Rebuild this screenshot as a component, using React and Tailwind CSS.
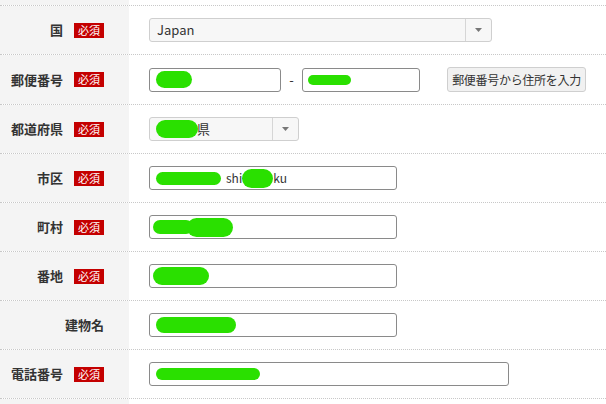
const font = { fontFamily: '"Noto Sans CJK JP", "Noto Sans", sans-serif' };

function Badge() {
  return (
    <span className="ml-[11px] inline-flex h-[15px] w-[30px] items-center justify-center bg-[#c40000] text-[11px] font-normal leading-none text-white">
      必須
    </span>
  );
}

function Blob({ className }) {
  return <span className={`inline-block shrink-0 rounded-full bg-[#2ae000] ${className}`} />;
}

function Row({ label, required = true, h = 'h-[49px]', children }) {
  return (
    <div className={`grid grid-cols-[129px_1fr] border-b border-dotted border-[#c8c8c8] ${h}`}>
      <div className="flex items-center justify-end bg-[#f4f4f4] pr-[25px] text-[13px] font-bold text-[#333]">
        <span>{label}</span>
        {required && <Badge />}
      </div>
      <div className="flex items-center gap-0 pl-[20px]">{children}</div>
    </div>
  );
}

function Field({ w, children }) {
  return (
    <div className={`flex h-[24px] items-center overflow-hidden rounded-[3px] border border-[#8a8a8a] bg-white pl-[3px] text-[12px] text-[#333] ${w}`}>
      {children}
    </div>
  );
}

function Select({ w, children }) {
  return (
    <div className={`flex h-[24px] items-stretch rounded-[3px] border border-[#cfcfcf] bg-[#f7f7f7] text-[13px] text-[#333] ${w}`}>
      <div className="flex flex-1 items-center pl-[7px]">{children}</div>
      <div className="flex w-[26px] items-center justify-center border-l border-[#d6d6d6]">
        <svg width="7" height="4" viewBox="0 0 7 4">
          <path d="M0 0h7L3.5 4z" fill="#777" />
        </svg>
      </div>
    </div>
  );
}

export default function App() {
  return (
    <div className="h-[404px] w-[606px] overflow-hidden bg-white" style={font}>
      <div className="grid h-[6px] grid-cols-[129px_1fr] border-b border-dotted border-[#c8c8c8]">
        <div className="bg-[#f4f4f4]" />
        <div />
      </div>
      <Row label="国">
        <Select w="w-[343px]">Japan</Select>
      </Row>
      <Row label="郵便番号" h="h-[50px]">
        <Field w="w-[132px]">
          <Blob className="ml-[3px] h-[17px] w-[36px]" />
        </Field>
        <span className="w-[21px] text-center text-[13px] text-[#333]">-</span>
        <Field w="w-[118px]">
          <Blob className="ml-[2px] h-[10px] w-[43px]" />
        </Field>
        <button className="ml-[27px] flex h-[25px] w-[139px] items-center justify-center rounded-[3px] border border-[#cfcfcf] bg-[#f1f1f1] text-[12px] tracking-[-0.3px] text-[#333]">
          郵便番号から住所を入力
        </button>
      </Row>
      <Row label="都道府県">
        <Select w="w-[150px]">
          <Blob className="-ml-[1px] h-[18px] w-[42px]" />
          <span className="-ml-[1px]">県</span>
        </Select>
      </Row>
      <Row label="市区">
        <Field w="w-[248px]">
          <Blob className="ml-[3px] h-[13px] w-[65px]" />
          <span className="ml-[5px]">shi</span>
          <Blob className="h-[19px] w-[31px]" />
          <span>ku</span>
        </Field>
      </Row>
      <Row label="町村">
        <Field w="w-[248px]">
          <Blob className="ml-[0px] h-[14px] w-[40px]" />
          <Blob className="-ml-[6px] h-[19px] w-[46px]" />
        </Field>
      </Row>
      <Row label="番地">
        <Field w="w-[248px]">
          <Blob className="h-[18px] w-[56px]" />
        </Field>
      </Row>
      <Row label="建物名" required={false}>
        <Field w="w-[248px]">
          <Blob className="ml-[3px] h-[16px] w-[80px]" />
        </Field>
      </Row>
      <Row label="電話番号">
        <Field w="w-[360px]">
          <Blob className="ml-[3px] h-[12px] w-[104px]" />
        </Field>
      </Row>
      <div className="grid h-[20px] grid-cols-[129px_1fr]">
        <div className="bg-[#f4f4f4]" />
        <div />
      </div>
    </div>
  );
}
